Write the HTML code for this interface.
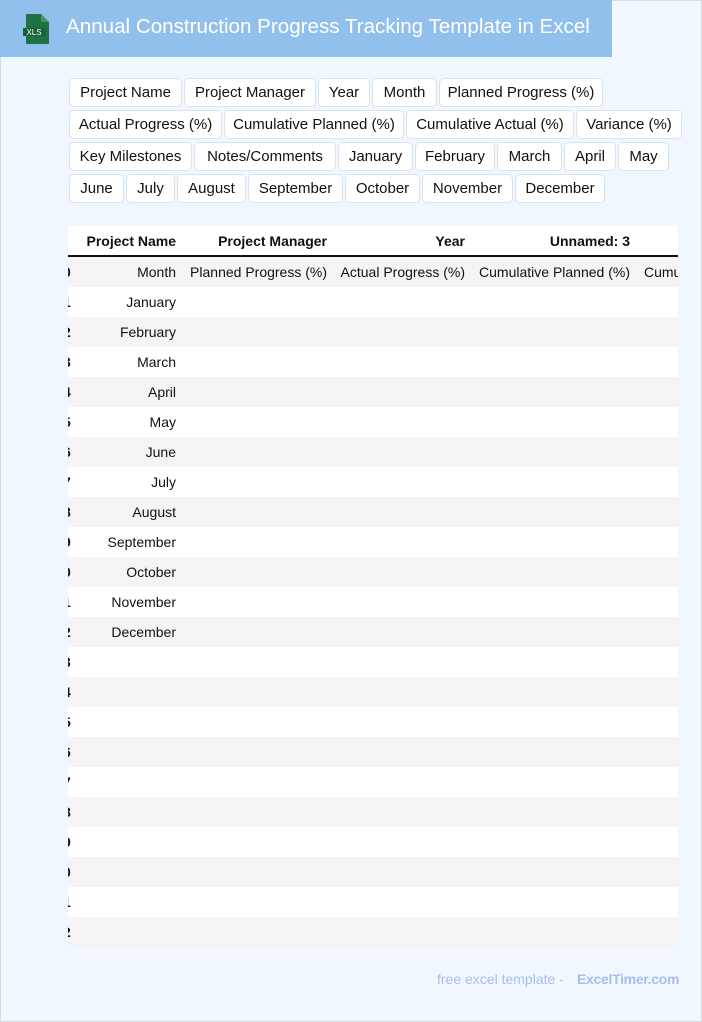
<!DOCTYPE html>
<html><head><meta charset="utf-8"><style>
*{margin:0;padding:0;box-sizing:border-box}
body{width:702px;height:1022px;background:#f0f7ff;font-family:"Liberation Sans",Arial,sans-serif;position:relative;overflow:hidden}
.frame{position:absolute;left:0;top:0;width:702px;height:1022px;border:1px solid #d0dce8}
.hdr{position:absolute;left:0;top:0;width:612px;height:57px;background:#92c0ec}
.title{position:absolute;left:66px;top:15px;color:#fff;font-size:20.6px;white-space:nowrap}
.tag{position:absolute;height:29px;background:#fff;border:1px solid #d9e3ee;border-radius:5px;font-size:15px;color:#111;text-align:center;line-height:27px;white-space:nowrap}
.tbl{position:absolute;left:68px;top:226px;width:610px;height:721px;background:#fff;overflow:hidden}
.row{position:absolute;left:0;width:610px;height:30px}
.g{background:#f4f4f4}
.c{position:absolute;font-size:14px;color:#111;white-space:nowrap;line-height:30px;text-align:right}
.b{font-weight:bold}
.foot{position:absolute;top:971px;font-size:14px;color:#aabde8}
</style></head><body>
<div class="frame"></div>
<div class="hdr"></div>
<svg style="position:absolute;left:21px;top:13px" width="30" height="32" viewBox="0 0 30 32">
<path d="M6 1h14l8 8v21a1 1 0 0 1-1 1H6a1 1 0 0 1-1-1V2a1 1 0 0 1 1-1z" fill="#1e7145"/>
<path d="M20 1v8h8z" fill="#3a9a64"/>
<rect x="2" y="15" width="22" height="8" fill="#166039"/>
<text x="13" y="22" font-size="8" fill="#fff" text-anchor="middle" font-family="Liberation Sans">XLS</text>
</svg>
<div class="title">Annual Construction Progress Tracking Template in Excel</div>

<div class="tag" style="left:69px;top:78px;width:113px">Project Name</div>
<div class="tag" style="left:184px;top:78px;width:132px">Project Manager</div>
<div class="tag" style="left:318px;top:78px;width:52px">Year</div>
<div class="tag" style="left:372px;top:78px;width:65px">Month</div>
<div class="tag" style="left:439px;top:78px;width:164px">Planned Progress (%)</div>
<div class="tag" style="left:69px;top:110px;width:153px">Actual Progress (%)</div>
<div class="tag" style="left:224px;top:110px;width:180px">Cumulative Planned (%)</div>
<div class="tag" style="left:406px;top:110px;width:168px">Cumulative Actual (%)</div>
<div class="tag" style="left:576px;top:110px;width:106px">Variance (%)</div>
<div class="tag" style="left:69px;top:142px;width:123px">Key Milestones</div>
<div class="tag" style="left:194px;top:142px;width:142px">Notes/Comments</div>
<div class="tag" style="left:338px;top:142px;width:75px">January</div>
<div class="tag" style="left:415px;top:142px;width:80px">February</div>
<div class="tag" style="left:497px;top:142px;width:65px">March</div>
<div class="tag" style="left:564px;top:142px;width:52px">April</div>
<div class="tag" style="left:618px;top:142px;width:51px">May</div>
<div class="tag" style="left:69px;top:174px;width:55px">June</div>
<div class="tag" style="left:126px;top:174px;width:49px">July</div>
<div class="tag" style="left:177px;top:174px;width:69px">August</div>
<div class="tag" style="left:248px;top:174px;width:95px">September</div>
<div class="tag" style="left:345px;top:174px;width:75px">October</div>
<div class="tag" style="left:422px;top:174px;width:91px">November</div>
<div class="tag" style="left:515px;top:174px;width:90px">December</div>

<div class="tbl">
<div class="row" style="top:0;border-bottom:2px solid #111;height:31px">
<div class="c b" style="right:502px">Project Name</div>
<div class="c b" style="right:351px">Project Manager</div>
<div class="c b" style="right:213px">Year</div>
<div class="c b" style="right:48px">Unnamed: 3</div>
</div>
<div class="row g" style="top:31px">
<div class="c b" style="left:-5px">0</div>
<div class="c" style="right:502px">Month</div>
<div class="c" style="right:351px">Planned Progress (%)</div>
<div class="c" style="right:213px">Actual Progress (%)</div>
<div class="c" style="right:48px">Cumulative Planned (%)</div>
<div class="c" style="left:576px;text-align:left">Cumulative Actual (%)</div>
</div>
<div class="row" style="top:61px"><div class="c b" style="left:-5px">1</div><div class="c" style="right:502px">January</div></div>
<div class="row g" style="top:91px"><div class="c b" style="left:-5px">2</div><div class="c" style="right:502px">February</div></div>
<div class="row" style="top:121px"><div class="c b" style="left:-5px">3</div><div class="c" style="right:502px">March</div></div>
<div class="row g" style="top:151px"><div class="c b" style="left:-5px">4</div><div class="c" style="right:502px">April</div></div>
<div class="row" style="top:181px"><div class="c b" style="left:-5px">5</div><div class="c" style="right:502px">May</div></div>
<div class="row g" style="top:211px"><div class="c b" style="left:-5px">6</div><div class="c" style="right:502px">June</div></div>
<div class="row" style="top:241px"><div class="c b" style="left:-5px">7</div><div class="c" style="right:502px">July</div></div>
<div class="row g" style="top:271px"><div class="c b" style="left:-5px">8</div><div class="c" style="right:502px">August</div></div>
<div class="row" style="top:301px"><div class="c b" style="left:-5px">9</div><div class="c" style="right:502px">September</div></div>
<div class="row g" style="top:331px"><div class="c b" style="left:-5px">0</div><div class="c" style="right:502px">October</div></div>
<div class="row" style="top:361px"><div class="c b" style="left:-5px">1</div><div class="c" style="right:502px">November</div></div>
<div class="row g" style="top:391px"><div class="c b" style="left:-5px">2</div><div class="c" style="right:502px">December</div></div>
<div class="row" style="top:421px"><div class="c b" style="left:-5px">3</div></div>
<div class="row g" style="top:451px"><div class="c b" style="left:-5px">4</div></div>
<div class="row" style="top:481px"><div class="c b" style="left:-5px">5</div></div>
<div class="row g" style="top:511px"><div class="c b" style="left:-5px">6</div></div>
<div class="row" style="top:541px"><div class="c b" style="left:-5px">7</div></div>
<div class="row g" style="top:571px"><div class="c b" style="left:-5px">8</div></div>
<div class="row" style="top:601px"><div class="c b" style="left:-5px">9</div></div>
<div class="row g" style="top:631px"><div class="c b" style="left:-5px">0</div></div>
<div class="row" style="top:661px"><div class="c b" style="left:-5px">1</div></div>
<div class="row g" style="top:691px"><div class="c b" style="left:-5px">2</div></div>
</div>

<div class="foot" style="left:437px">free excel template -</div>
<div class="foot" style="left:577px;font-weight:bold;letter-spacing:-0.3px">ExcelTimer.com</div>
</body></html>
